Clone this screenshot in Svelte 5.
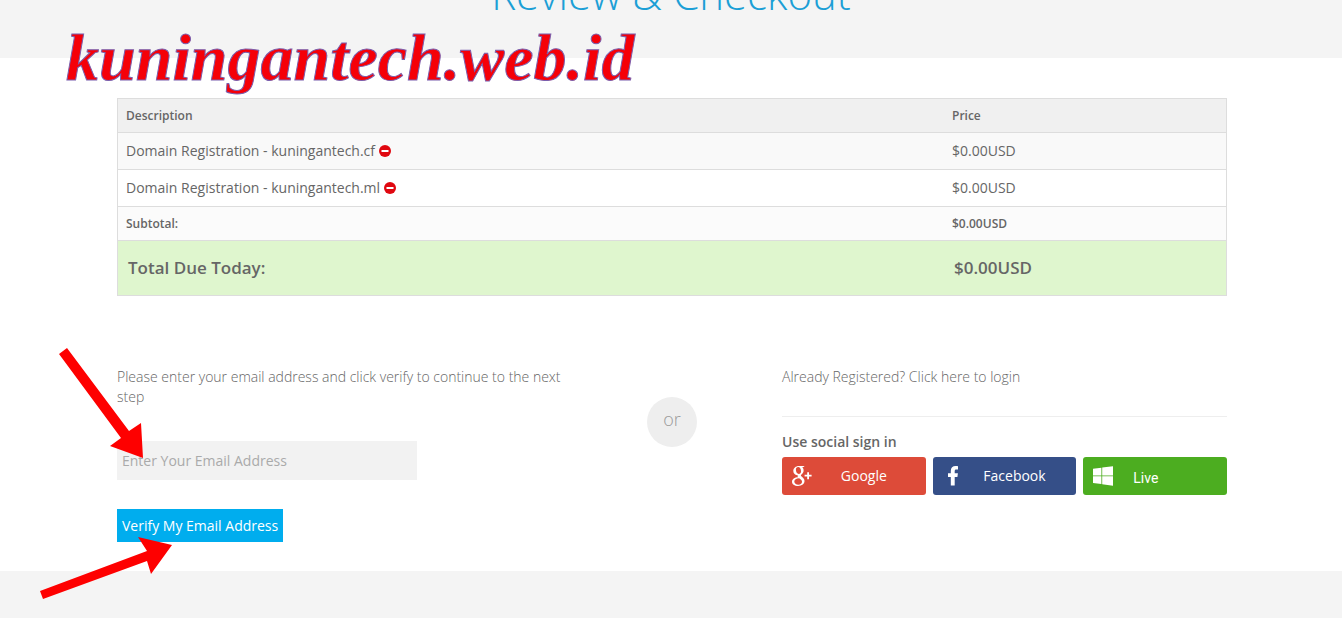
<script lang="ts">
	type CartItem = { id: number; name: string; price: string };

	let items: CartItem[] = $state([
		{ id: 1, name: 'Domain Registration - kuningantech.cf', price: '$0.00USD' },
		{ id: 2, name: 'Domain Registration - kuningantech.ml', price: '$0.00USD' }
	]);
	let email = $state('');

	function removeItem(id: number) {
		items = items.filter((item) => item.id !== id);
	}
</script>

<header class="page-header">
	<h1>Review &amp; Checkout</h1>
</header>

<main class="checkout">
	<div class="container">
		<table class="cart">
			<thead>
				<tr>
					<th>Description</th>
					<th class="price">Price</th>
				</tr>
			</thead>
			<tbody>
				{#each items as item (item.id)}
					<tr class="item">
						<td>
							{item.name}
							<button class="remove" aria-label="Remove" onclick={() => removeItem(item.id)}>
								<svg viewBox="0 0 12 12" width="12" height="12">
									<circle cx="6" cy="6" r="6" fill="#e00810" />
									<rect x="2.5" y="5" width="7" height="2" fill="#fff" />
								</svg>
							</button>
						</td>
						<td>{item.price}</td>
					</tr>
				{/each}
			</tbody>
			<tfoot>
				<tr class="subtotal">
					<th>Subtotal:</th>
					<td>$0.00USD</td>
				</tr>
				<tr class="total">
					<th>Total Due Today:</th>
					<td>$0.00USD</td>
				</tr>
			</tfoot>
		</table>

		<div class="signin">
			<form class="verify" onsubmit={(e) => e.preventDefault()}>
				<label for="email">
					Please enter your email address and click verify to continue to the next step
				</label>
				<input id="email" type="email" placeholder="Enter Your Email Address" bind:value={email} />
				<button type="submit">Verify My Email Address</button>
			</form>

			<div class="divider"><span>or</span></div>

			<div class="registered">
				<a class="login" href="#login">Already Registered? Click here to login</a>
				<h2>Use social sign in</h2>
				<div class="social">
					<button class="google">
						<svg viewBox="0 0 20 20" width="20" height="20" fill="#fff">
							<path
								fill-rule="evenodd"
								d="M12.600 0H7C3.700 0 1.300 2.200 1.300 4.900c0 2.500 1.900 4.300 4.500 4.300-.4.900-.2 1.500.4 2.100C2.600 11.400 0 13.100 0 15.700 0 18.300 2.500 20 6 20c4.100 0 6.500-2.200 6.500-4.900 0-2-1-3.200-2.600-4.400-1.400-1-1.300-1.600-.2-2.500 1.200-1 1.900-2 1.900-3.700 0-1.500-.6-2.700-1.500-3.400h1.400zM6.200 1.100c1.600 0 2.800 1.900 2.800 4.100 0 1.700-.9 2.800-2.200 2.800-1.700 0-2.900-2-2.900-4.200 0-1.700.9-2.700 2.300-2.700zM7.200 12.300c1.900 1.300 2.800 2 2.800 3.500 0 1.700-1.300 2.900-3.600 2.900-2.400 0-4.100-1.300-4.100-3.200 0-1.900 2-3.200 4.900-3.200z"
							/>
							<path d="M15.200 6.200H17v2.600h2.600v1.800H17v2.600h-1.800v-2.600h-2.600V8.800h2.600z" />
						</svg>
						<span>Google</span>
					</button>
					<button class="facebook">
						<svg viewBox="0 0 20 20" width="20" height="20" fill="#fff">
							<path d="M7.800 19.500V11H5V7.200h2.800V5C7.800 1.800 9.600 0 12.600 0c1.100 0 2 .1 2.400.2v3.400h-1.700c-1.300 0-1.600.7-1.600 1.700v1.900h3.200L14.400 11h-2.700v8.500z" />
						</svg>
						<span>Facebook</span>
					</button>
					<button class="live">
						<svg viewBox="0 0 20 20" width="20" height="20" fill="#fff">
							<path d="M0 2.800 8.400 1.700v7.700H0zM9.200 1.600 20 .2v9.200H9.200zM0 10.200h8.400v7.900L0 17zM9.200 10.200H20v9.500L9.200 18.200z" />
						</svg>
						<span>Live</span>
					</button>
				</div>
			</div>
		</div>

		<!-- notes drawn over the page -->
		<div class="watermark">kuningantech.web.id</div>
		<svg class="arrows" viewBox="0 0 140 260" width="140" height="260" fill="#fe0000">
			<path d="M18 10 26 4 88 87 100 79 102 114 69 102 80 94z" />
			<path d="M-1 247 106 207 97 193 131 201 110 230 106 217 2 255z" />
		</svg>
	</div>
</main>

<footer class="page-footer"></footer>

<style>
	:global(body) {
		margin: 0;
		background: #f4f4f4;
		color: #666;
		font-family: 'Open Sans', sans-serif;
		font-size: 14px;
		line-height: 20px;
	}

	.page-header {
		display: flex;
		align-items: flex-end;
		justify-content: center;
		height: 58px;
		overflow: hidden;
	}

	h1 {
		margin: 0;
		padding-bottom: 40px;
		color: #1c9fd6;
		font-size: 42px;
		font-weight: 300;
		line-height: 48px;
	}

	.checkout {
		padding: 40px 16px 29px 18px;
		background: #fff;
	}

	.container {
		position: relative;
		max-width: 1110px;
		margin: 0 auto;
	}

	.cart {
		width: 100%;
		table-layout: fixed;
		border-collapse: collapse;
	}

	.cart tr {
		border: 1px solid #ddd;
	}

	.cart th,
	.cart td {
		padding: 8px;
		text-align: left;
	}

	.cart thead th {
		padding: 7px 8px 6px;
		background: #f0f0f0;
		font-size: 12px;
		font-weight: 600;
	}

	.cart .price {
		width: 266px;
	}

	.item:nth-child(odd) {
		background: #f9f9f9;
	}

	.remove {
		padding: 0;
		border: none;
		background: none;
		line-height: 12px;
		vertical-align: -1px;
		cursor: pointer;
	}

	.remove svg {
		display: block;
	}

	.cart .subtotal th,
	.cart .subtotal td {
		padding: 7px 8px 6px;
		background: #fbfbfb;
		font-size: 12px;
		font-weight: 600;
	}

	.cart .total th,
	.cart .total td {
		padding: 17px 10px;
		background: #dff6ce;
		font-size: 17px;
		font-weight: 600;
	}

	.signin {
		display: flex;
		padding-top: 71px;
	}

	.verify,
	.registered {
		flex: 1;
		min-width: 0;
	}

	.verify {
		display: flex;
		flex-direction: column;
		align-items: flex-start;
	}

	label {
		font-weight: 300;
	}

	input {
		box-sizing: border-box;
		width: 300px;
		max-width: 100%;
		height: 39px;
		margin: 34px 0 29px;
		padding: 0 5px;
		border: none;
		background: #f2f2f2;
		color: #666;
		font: inherit;
	}

	input::placeholder {
		color: #aaa;
	}

	.verify button {
		height: 33px;
		padding: 0 5px;
		border: none;
		background: #00adee;
		color: #fff;
		font: inherit;
	}

	.divider {
		display: flex;
		justify-content: center;
		width: 220px;
		padding-top: 30px;
	}

	.divider span {
		width: 50px;
		height: 50px;
		border-radius: 50%;
		background: #eee;
		color: #999;
		font-size: 18px;
		font-weight: 300;
		line-height: 44px;
		text-align: center;
	}

	.login {
		display: block;
		padding-bottom: 29px;
		border-bottom: 1px solid #eee;
		color: inherit;
		font-weight: 300;
		text-decoration: none;
	}

	h2 {
		margin: 15px 0 5px;
		font-size: 14px;
		font-weight: 600;
		line-height: 20px;
	}

	.social {
		display: grid;
		grid-template-columns: repeat(3, 1fr);
		gap: 7px;
	}

	.social button {
		display: flex;
		align-items: center;
		height: 38px;
		padding: 0 10px;
		border: none;
		border-radius: 3px;
		color: #fff;
		font: inherit;
	}

	.social span {
		flex: 1;
	}

	.social .google {
		background: #dd4b39;
	}

	.social .facebook {
		background: #354f88;
	}

	.social .live {
		background: #4cad20;
	}

	.live span {
		padding: 4px 20px 0;
		font-family: Roboto, sans-serif;
		text-align: left;
	}

	.page-footer {
		height: 47px;
	}

	.watermark {
		position: absolute;
		top: -76px;
		left: -51px;
		color: #f50008;
		font-family: 'Lucida Calligraphy', 'Monotype Corsiva', 'Liberation Serif', serif;
		font-size: 66px;
		font-style: italic;
		font-weight: bold;
		line-height: 72px;
		white-space: nowrap;
		-webkit-text-stroke: 1px #7a5fae;
		pointer-events: none;
	}

	.arrows {
		position: absolute;
		top: 246px;
		left: -76px;
		overflow: visible;
		pointer-events: none;
	}
</style>
